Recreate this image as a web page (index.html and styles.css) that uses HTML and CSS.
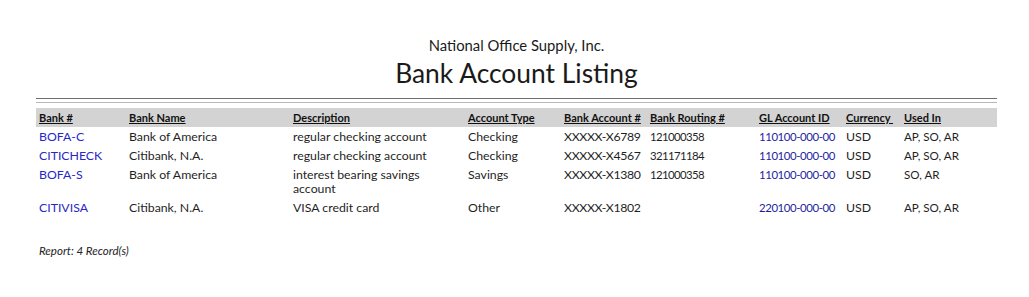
FILE: index.html
```html
<!DOCTYPE html>
<html>
<head>
<meta charset="utf-8">
<link rel="stylesheet" href="styles.css">
</head>
<body>
<div class="report">
  <div class="company">National Office Supply, Inc.</div>
  <h1 class="title">Bank Account Listing</h1>
  <div class="rule-dark"></div>
  <div class="rule-light"></div>
  <table class="grid">
    <colgroup>
      <col class="c1"><col class="c2"><col class="c3"><col class="c4"><col class="c5"><col class="c6"><col class="c7"><col class="c8"><col class="c9">
    </colgroup>
    <thead>
      <tr>
        <th>Bank #</th><th>Bank Name</th><th>Description</th><th>Account Type</th><th>Bank Account #</th><th>Bank Routing #</th><th>GL Account ID</th><th>Currency&nbsp;</th><th>Used In</th>
      </tr>
    </thead>
    <tbody>
      <tr>
        <td><a class="lnk">BOFA-C</a></td><td>Bank of America</td><td class="desc">regular checking account</td><td>Checking</td><td class="acct">XXXXX-X6789</td><td class="route">121000358</td><td class="glc"><a class="gl">110100-000-00</a></td><td>USD</td><td class="used">AP, SO, AR</td>
      </tr>
      <tr>
        <td><a class="lnk">CITICHECK</a></td><td>Citibank, N.A.</td><td class="desc">regular checking account</td><td>Checking</td><td class="acct">XXXXX-X4567</td><td class="route">321171184</td><td class="glc"><a class="gl">110100-000-00</a></td><td>USD</td><td class="used">AP, SO, AR</td>
      </tr>
      <tr>
        <td><a class="lnk">BOFA-S</a></td><td>Bank of America</td><td class="desc">interest bearing savings account</td><td>Savings</td><td class="acct">XXXXX-X1380</td><td class="route">121000358</td><td class="glc"><a class="gl">110100-000-00</a></td><td>USD</td><td class="used">SO, AR</td>
      </tr>
      <tr>
        <td><a class="lnk">CITIVISA</a></td><td>Citibank, N.A.</td><td class="desc">VISA credit card</td><td>Other</td><td class="acct">XXXXX-X1802</td><td class="route"></td><td class="glc"><a class="gl">220100-000-00</a></td><td>USD</td><td class="used">AP, SO, AR</td>
      </tr>
    </tbody>
  </table>
  <div class="footer">Report: 4 Record(s)</div>
</div>
</body>
</html>
```
FILE: styles.css
```css
html, body {
  margin: 0;
  padding: 0;
  background: #ffffff;
}
body {
  font-family: Lato, "Open Sans", "Liberation Sans", sans-serif;
  color: #1a1a1a;
}
.report {
  width: 961px;
  margin-left: 36px;
  padding-top: 36px;
}
.company {
  text-align: center;
  font-size: 14.8px;
  line-height: 18px;
}
.title {
  margin: 2px 0 0 0;
  text-align: center;
  font-size: 26.4px;
  font-weight: normal;
  line-height: 34px;
}
.rule-dark {
  margin-top: 8px;
  height: 1px;
  background: #6e6e6e;
}
.rule-light {
  margin-top: 3px;
  height: 1px;
  background: #b8b8b8;
}
.grid {
  margin-top: 5px;
  width: 961px;
  border-collapse: collapse;
  table-layout: fixed;
  font-size: 12.3px;
}
.c1 { width: 90px; }
.c2 { width: 164px; }
.c3 { width: 175px; }
.c4 { width: 96px; }
.c5 { width: 86px; }
.c6 { width: 109px; }
.c7 { width: 87px; }
.c8 { width: 58px; }
.c9 { width: 96px; }
.grid thead tr {
  background: #d3d3d3;
}
.grid th {
  text-align: left;
  font-weight: bold;
  font-size: 11px;
  text-decoration: underline;
  padding: 3px 3px 2px 3px;
  line-height: 14px;
  color: #111;
  white-space: nowrap;
}
.grid td {
  padding: 3px 3px 2px 3px;
  line-height: 14px;
  vertical-align: top;
  color: #1f1f1f;
  white-space: nowrap;
}
.grid td.desc {
  white-space: normal;
  padding-right: 24px;
}
.acct {
  letter-spacing: -0.35px;
}
.grid td.route {
  font-size: 11.4px;
  letter-spacing: -0.6px;
}
.grid td.glc {
  font-size: 11.4px;
  letter-spacing: -0.4px;
}
.grid td.used {
  font-size: 11.6px;
}
.lnk {
  color: #2727c6;
}
.gl {
  color: #1e1ea0;
}
.footer {
  margin-top: 27px;
  padding-left: 3px;
  font-size: 11.5px;
  font-style: italic;
  color: #222;
}
```
